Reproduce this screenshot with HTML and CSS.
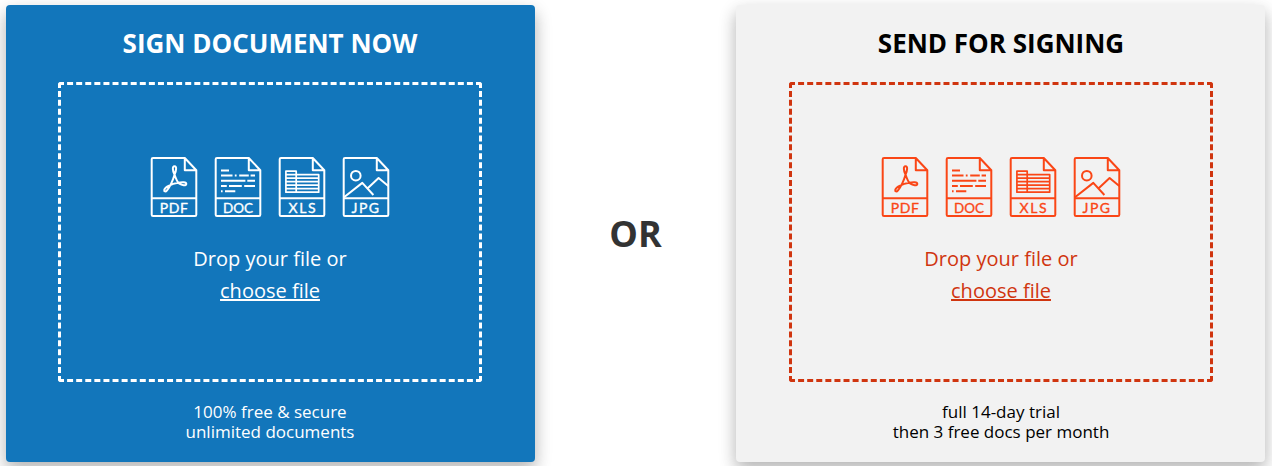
FILE: index.html
```html
<!DOCTYPE html>
<html lang="en">
<head>
<meta charset="utf-8">
<title>Sign documents</title>
<link rel="stylesheet" href="styles.css">
</head>
<body>
<svg class="sprite" aria-hidden="true">
  <symbol id="sheet" viewBox="0 0 48 60">
    <path d="M34.8 1H3Q1.7 1 1.7 2.3V57.7Q1.7 59 3 59H45Q46.3 59 46.3 57.7V13.2ZM34.8 1V13.2H46.3M1.7 41.3H46.3"/>
  </symbol>
  <symbol id="pdf" viewBox="0 0 48 60">
    <path d="M24.4 17.2C22.6 13.6 22.1 9.2 24.5 9.2C27 9.2 26.2 13.6 24.7 17.2C23.2 22.2 20 29.6 17 33.3C15.5 35.2 13.8 34.5 14.3 32.7C15.2 29.7 21.6 26.9 28 25.8C32 25 36.4 25 36.3 27C36.2 29.1 32 28.3 29 26.3C27 24.7 25.5 20.5 24.4 17.2Z"/>
  </symbol>
  <symbol id="doc" viewBox="0 0 48 60">
    <path d="M7 13.5H15M7 18.4H18.5M20.8 18.4H22.6M25.2 18.4H34.8M36.6 18.4H41M7 23.7H31.4M33.3 23.7H41M7 29H12.8M15 29H27.8M30.2 29H41M7 34.2H8.6M11 34.2H21.3"/>
  </symbol>
  <symbol id="xls" viewBox="0 0 48 60">
    <path d="M7.9 14.2H18.2V35.2H7.9ZM18.2 17.7H40.7V35.2H18.2M7.9 17.7H18.2M7.9 21.2H40.7M7.9 24.7H40.7M7.9 28.2H40.7M7.9 31.7H40.7"/>
  </symbol>
  <symbol id="jpg" viewBox="0 0 48 60">
    <path d="M2 40.3L20.3 25.9L31.4 38M25.4 31.5L36.6 21L46.3 29"/><circle cx="13.8" cy="18.7" r="4.8"/>
  </symbol>
</svg>
<main class="page">
  <section class="card card-sign">
    <h2 class="title">SIGN DOCUMENT NOW</h2>
    <div class="drop">
      <div class="icons">
        <svg class="icon" viewBox="0 0 48 60"><use href="#sheet"/><use href="#pdf"/><text x="9.8" y="56" textLength="28">PDF</text></svg>
        <svg class="icon" viewBox="0 0 48 60"><use href="#sheet"/><use href="#doc"/><text x="9" y="56" textLength="30" lengthAdjust="spacingAndGlyphs">DOC</text></svg>
        <svg class="icon" viewBox="0 0 48 60"><use href="#sheet"/><use class="thin" href="#xls"/><text x="10.5" y="56" textLength="27">XLS</text></svg>
        <svg class="icon" viewBox="0 0 48 60"><use href="#sheet"/><use href="#jpg"/><text x="9.5" y="56" textLength="27.5">JPG</text></svg>
      </div>
      <p class="prompt">Drop your file or<br><a class="choose" href="#">choose file</a></p>
    </div>
    <p class="note">100% free &amp; secure<br>unlimited documents</p>
  </section>
  <div class="or">OR</div>
  <section class="card card-send">
    <h2 class="title">SEND FOR SIGNING</h2>
    <div class="drop">
      <div class="icons">
        <svg class="icon" viewBox="0 0 48 60"><use href="#sheet"/><use href="#pdf"/><text x="9.8" y="56" textLength="28">PDF</text></svg>
        <svg class="icon" viewBox="0 0 48 60"><use href="#sheet"/><use href="#doc"/><text x="9" y="56" textLength="30" lengthAdjust="spacingAndGlyphs">DOC</text></svg>
        <svg class="icon" viewBox="0 0 48 60"><use href="#sheet"/><use class="thin" href="#xls"/><text x="10.5" y="56" textLength="27">XLS</text></svg>
        <svg class="icon" viewBox="0 0 48 60"><use href="#sheet"/><use href="#jpg"/><text x="9.5" y="56" textLength="27.5">JPG</text></svg>
      </div>
      <p class="prompt">Drop your file or<br><a class="choose" href="#">choose file</a></p>
    </div>
    <p class="note">full 14-day trial<br>then 3 free docs per month</p>
  </section>
</main>
</body>
</html>
```
FILE: styles.css
```css
* { box-sizing: border-box; }
body {
  margin: 0;
  background: #fff;
  font-family: "Open Sans", "Noto Sans", sans-serif;
  overflow: hidden;
}
.sprite { display: none; }
.page {
  display: grid;
  grid-template-columns: 529px 201px 529px;
  height: 466px;
  padding: 5px 6px 4px;
}
.card {
  height: 457px;
  border-radius: 4px;
  padding: 22px 52px 0;
  text-align: center;
  box-shadow: 0 8px 16px rgba(0, 0, 0, 0.2), 0 6px 20px rgba(0, 0, 0, 0.12);
}
.card-sign { background: #1276bb; color: #fff; padding-right: 53px; }
.card-send { background: #f2f2f2; color: #000; padding-left: 53px; }
.title {
  margin: 0 0 22px;
  font-size: 26px;
  line-height: 33px;
  font-weight: 700;
}
.drop {
  width: 424px;
  height: 300px;
  padding-top: 72px;
  border: 3px dashed #fff;
  border-radius: 3px;
}
.card-send .drop { border-color: #d0350f; color: #d0350f; }
.icons { display: flex; justify-content: center; gap: 16px; }
.icon {
  width: 48px;
  height: 60px;
  fill: none;
  stroke: #fff;
  stroke-width: 2;
  stroke-linejoin: round;
}
.icon text {
  fill: #fff;
  stroke-width: 0.35;
  font: 14px Lato, "Noto Sans", sans-serif;
}
.card-send .icon { stroke: #fa4616; }
.card-send .icon text { fill: #fa4616; }
.thin { stroke-width: 1.7; }
.prompt { margin: 26px 0 0; font-size: 20px; line-height: 32px; }
.choose { color: inherit; text-decoration: underline; }
.note { margin: 20px 0 0; font-size: 17px; line-height: 20px; }
.or {
  display: flex;
  align-items: center;
  justify-content: center;
  font-size: 36px;
  font-weight: 700;
  color: #333;
}
```
